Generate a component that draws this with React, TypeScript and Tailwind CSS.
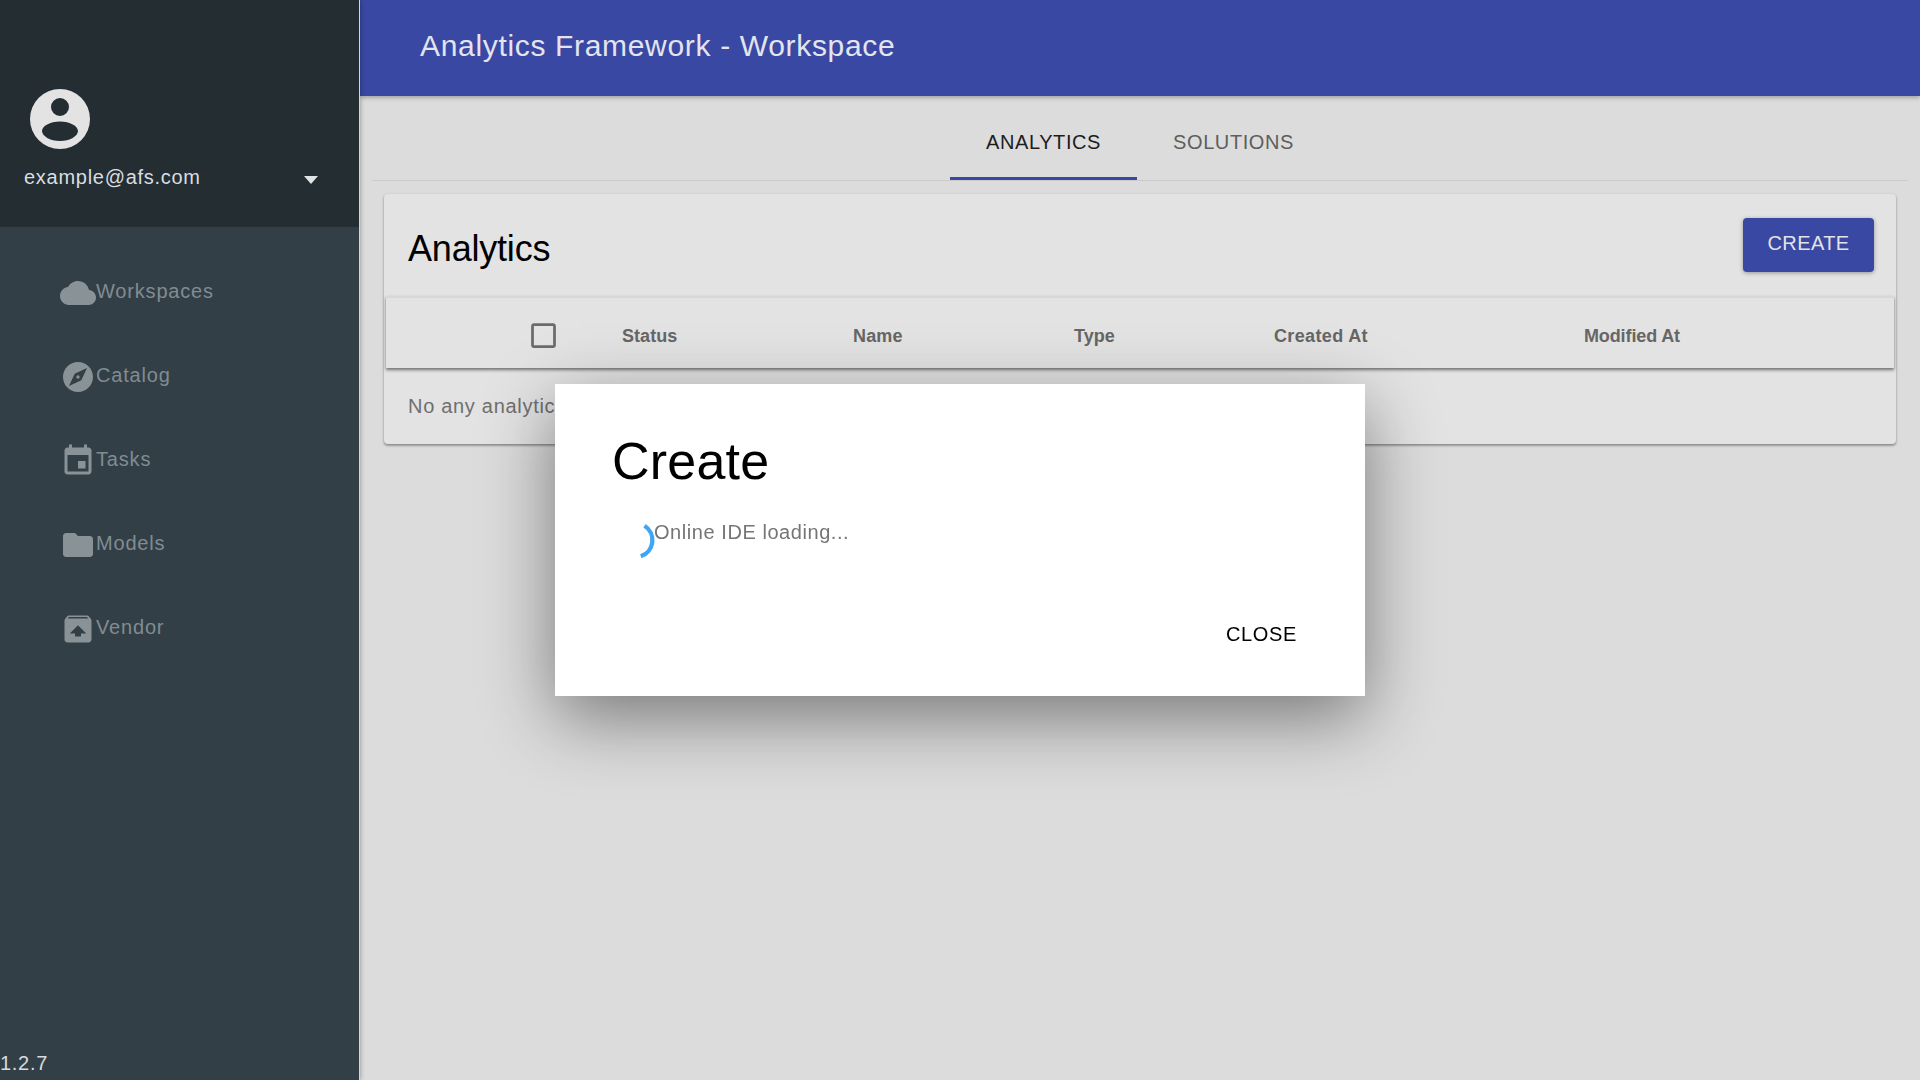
const navItems = [
  { label: "Workspaces", d: "M19.35 10.04C18.67 6.59 15.64 4 12 4 9.11 4 6.6 5.64 5.35 8.04 2.34 8.36 0 10.91 0 14c0 3.31 2.69 6 6 6h13c2.76 0 5-2.24 5-5 0-2.64-2.05-4.78-4.65-4.96z" },
  { label: "Catalog", d: "M12 10.9c-.61 0-1.1.49-1.1 1.1s.49 1.1 1.1 1.1c.61 0 1.1-.49 1.1-1.1s-.49-1.1-1.1-1.1zM12 2C6.48 2 2 6.48 2 12s4.48 10 10 10 10-4.48 10-10S17.52 2 12 2zm2.19 12.19L6 18l3.81-8.19L18 6l-3.81 8.19z" },
  { label: "Tasks", d: "M17 12h-5v5h5v-5zM16 1v2H8V1H6v2H5c-1.11 0-1.99.9-1.99 2L3 19c0 1.1.89 2 2 2h14c1.1 0 2-.9 2-2V5c0-1.1-.9-2-2-2h-1V1h-2zm3 18H5V8h14v11z" },
  { label: "Models", d: "M10 4H4c-1.1 0-1.99.9-1.99 2L2 18c0 1.1.9 2 2 2h16c1.1 0 2-.9 2-2V8c0-1.1-.9-2-2-2h-8l-2-2z" },
  { label: "Vendor", d: "M20.55 5.22l-1.39-1.68C18.88 3.21 18.47 3 18 3H6c-.47 0-.88.21-1.15.55L3.46 5.22C3.17 5.57 3 6.01 3 6.5V19c0 1.1.89 2 2 2h14c1.1 0 2-.9 2-2V6.5c0-.49-.17-.93-.45-1.28zM12 9.5l5.5 5.5H14v2h-4v-2H6.5L12 9.5zM5.12 5l.82-1h12l.93 1H5.12z" },
];

const columns = [
  { label: "Status", cls: "tracking-[0.05px]" },
  { label: "Name", cls: "tracking-[0.15px]" },
  { label: "Type", cls: "tracking-[0px]" },
  { label: "Created At", cls: "tracking-[0.35px]" },
  { label: "Modified At", cls: "tracking-[-0.12px]" },
];

function Sidebar() {
  return (
    <aside className="flex h-full w-[360px] shrink-0 flex-col border-r border-[#d5d5d5] bg-[#323f47] shadow-[1px_0_4px_rgba(0,0,0,0.25)] z-20">
      <div className="flex h-[227px] shrink-0 flex-col bg-[#232d32] pt-[89px]">
        <svg width="60" height="60" viewBox="0 0 60 60" className="ml-[30px]">
          <path
            fillRule="evenodd"
            fill="#e3e3e3"
            d="M30 0a30 30 0 1 0 0 60a30 30 0 1 0 0-60zM30 9a9 9 0 1 1 0 18a9 9 0 1 1 0-18zM30 32.500C20 32.500 12 37 12 42C12 47 20 52 30 52C40 52 48 47 48 42C48 37 40 32.500 30 32.500z"
          />
        </svg>
        <div className="mt-[14px] flex items-center justify-between pl-6 pr-[41px] text-[20px] leading-[28px] tracking-[0.72px] text-[#d9dee0]">
          <span>example@afs.com</span>
          <span className="mt-[5px] h-0 w-0 border-x-[7.5px] border-t-[8px] border-x-transparent border-t-[#dfe3e5]" />
        </div>
      </div>
      <nav className="flex flex-col pt-[23px]">
        {navItems.map((item) => (
          <div key={item.label} className="flex h-[84px] items-center pl-[60px] text-[20px] tracking-[0.82px] text-[#818c92]">
            <svg width="36" height="36" viewBox="0 0 24 24" fill="#899296" className="mt-[2px] shrink-0">
              <path d={item.d} />
            </svg>
            <span className="-mt-[2px]">{item.label}</span>
          </div>
        ))}
      </nav>
      <div className="mt-auto pb-[5px] text-[20px] leading-[24px] tracking-[0.7px] text-[#d5dbde]">1.2.7</div>
    </aside>
  );
}

function Tabs() {
  return (
    <div className="mx-3 flex h-[85px] justify-center border-b border-[#cbcbcb] text-[20px] tracking-[0.6px]">
      <div className="flex h-[84px] items-center border-b-[3px] border-[#3948a3] px-9 pt-[10px] text-[#1d1d1d]">ANALYTICS</div>
      <div className="flex h-[84px] items-center border-b-[3px] border-transparent px-9 pt-[10px] text-[#5e5e5e]">SOLUTIONS</div>
    </div>
  );
}

function Card() {
  return (
    <section className="mx-6 mt-[13px] flex h-[250px] flex-col rounded bg-[#e3e3e3] shadow-[0_1px_3px_rgba(0,0,0,0.25),0_2px_2px_rgba(0,0,0,0.2)]">
      <div className="flex h-[102px] shrink-0 items-center justify-between pl-6 pr-[22px]">
        <h2 className="mt-2 text-[36px] leading-none tracking-[-0.2px] text-black">Analytics</h2>
        <button className="flex h-[54px] w-[131px] items-center justify-center rounded bg-[#3948a3] pb-1 text-[20px] tracking-[0.4px] text-[#e3e3e3] shadow-[0_1px_4px_rgba(0,0,0,0.35)]">
          CREATE
        </button>
      </div>
      <div className="mx-0.5 grid h-[72px] shrink-0 grid-cols-[236px_231px_221px_200px_310px_1fr] items-center border-t-2 border-[#d8d8d8] pt-1 text-[18px] font-bold text-[#666666] shadow-[0_2px_3px_rgba(0,0,0,0.5)]">
        <div className="pl-[141px]">
          <svg width="33" height="33" viewBox="0 0 24 24" fill="#6b6b6b" className="block">
            <path d="M19 5v14H5V5h14m0-2H5c-1.100 0-2 .9-2 2v14c0 1.100.9 2 2 2h14c1.100 0 2-.9 2-2V5c0-1.100-.9-2-2-2z" />
          </svg>
        </div>
        {columns.map((c) => (
          <div key={c.label} className={`mt-0.5 ${c.cls}`}>{c.label}</div>
        ))}
      </div>
      <div className="flex flex-1 items-center pl-6 text-[20px] tracking-[0.7px] text-[#6f6f6f]">No any analytics found</div>
    </section>
  );
}

function Dialog() {
  return (
    <div className="fixed inset-0 z-30 flex items-center justify-center">
      <div className="flex h-[312px] w-[810px] flex-col bg-white shadow-[0_22px_68px_0_rgba(0,0,0,0.45)]">
        <h2 className="ml-[57px] mt-[47px] text-[52px] leading-[60px] tracking-[0.2px] text-black">Create</h2>
        <div className="ml-[61px] mt-[29px] flex items-start">
          <svg width="40" height="40" viewBox="0 0 40 40" className="shrink-0">
            <path d="M28.500 5.800A17 17 0 0 1 24.800 36.300" fill="none" stroke="#3fa5f4" strokeWidth="4.300" />
          </svg>
          <span className="-ml-[2px] text-[20px] leading-[24px] tracking-[0.56px] text-[#757575]">Online IDE loading...</span>
        </div>
        <div className="mt-auto flex justify-end pb-[50px] pr-[68px]">
          <button className="text-[20px] leading-[24px] tracking-[0.65px] text-black">CLOSE</button>
        </div>
      </div>
    </div>
  );
}

export default function App() {
  return (
    <div className="flex h-screen w-full overflow-hidden bg-[#dcdcdc] [font-family:'Liberation_Sans',Arial,sans-serif]">
      <Sidebar />
      <main className="flex min-w-0 flex-1 flex-col">
        <header className="flex h-[96px] shrink-0 items-center bg-[#3948a3] pb-[5px] pl-[60px] text-[30px] tracking-[0.67px] text-[#e3e4ee] shadow-[0_2px_4px_rgba(0,0,0,0.25)]">
          Analytics Framework - Workspace
        </header>
        <Tabs />
        <Card />
      </main>
      <Dialog />
    </div>
  );
}
